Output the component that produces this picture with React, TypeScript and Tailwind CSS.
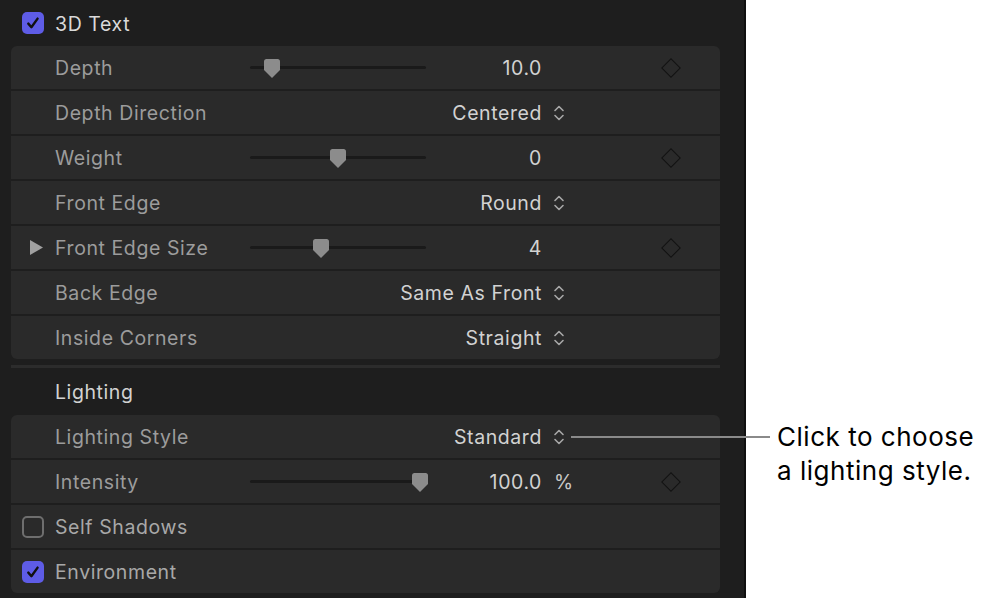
import React from "react";

const Thumb = () => (
  <svg width="16" height="19" viewBox="0 0 16 19" className="block">
    <path d="M2.5 0 H13.5 Q16 0 16 2.5 V11 L8 19 L0 11 V2.5 Q0 0 2.5 0 Z" fill="#8c8c8c" />
  </svg>
);

const Slider = ({ pos }: { pos: number }) => (
  <div className="relative w-[176px] h-[20px] flex items-center">
    <div className="w-full h-[3px] rounded-full bg-[#1a1a1a]" />
    <div className="absolute top-[1px]" style={{ left: pos - 8 }}>
      <Thumb />
    </div>
  </div>
);

const Diamond = () => (
  <div className="w-[14px] h-[14px] rotate-45 border-[1.5px] border-[#121212]" />
);

const UpDown = () => (
  <svg width="12" height="20" viewBox="0 0 12 20" className="block">
    <path d="M2 7.5 L6 3.5 L10 7.5" fill="none" stroke="#a8a8a8" strokeWidth="1.6" strokeLinecap="round" strokeLinejoin="round" />
    <path d="M2 12.5 L6 16.5 L10 12.5" fill="none" stroke="#a8a8a8" strokeWidth="1.6" strokeLinecap="round" strokeLinejoin="round" />
  </svg>
);

const Check = ({ on }: { on: boolean }) =>
  on ? (
    <div className="w-[22px] h-[22px] rounded-[5px] bg-[#5e5ce6] flex items-center justify-center">
      <svg width="14" height="14" viewBox="0 0 14 14">
        <path d="M2.3 7.6 L5.4 11.2 L11.6 2.6" fill="none" stroke="#111" strokeWidth="2.4" strokeLinecap="round" strokeLinejoin="round" />
      </svg>
    </div>
  ) : (
    <div className="w-[22px] h-[22px] rounded-[5px] border-2 border-[#6e6e6e]" />
  );

type RowProps = {
  label: string;
  slider?: number;
  value?: string;
  unit?: string;
  popup?: boolean;
  key_?: boolean;
  lead?: "check-on" | "check-off" | "tri";
};

const Row = ({ label, slider, value, unit, popup, key_, lead }: RowProps) => (
  <div className="h-[43px] bg-[#2a2a2a] flex items-center">
    <div className="w-[239px] flex items-center h-full">
      <div className="w-[44px] h-full flex items-center">
        {lead === "check-on" && <div className="ml-[11px]"><Check on /></div>}
        {lead === "check-off" && <div className="ml-[11px]"><Check on={false} /></div>}
        {lead === "tri" && (
          <svg width="13" height="15" viewBox="0 0 13 15" className="ml-[19px]">
            <path d="M0 0 L13 7.5 L0 15 Z" fill="#a0a0a0" />
          </svg>
        )}
      </div>
      <span
        className={`pt-[3px] whitespace-nowrap text-[19.5px] tracking-[0.03em] ${
          lead === "check-on" || lead === "check-off" ? "text-[#a8a8a8]" : "text-[#9c9c9c]"
        }`}
      >
        {label}
      </span>
    </div>
    <div className="w-[176px]">{slider !== undefined && <Slider pos={slider} />}</div>
    <div className="w-[116px] flex justify-end whitespace-nowrap pt-[3px] text-[19.5px] tracking-[0.03em] text-[#d2d2d2]">
      {value}
    </div>
    <div className="w-[40px] flex items-center">
      {popup && <div className="ml-[11px]"><UpDown /></div>}
      {unit && <span className="ml-[12px] pt-[3px] text-[19.5px] text-[#c8c8c8]">{unit}</span>}
    </div>
    <div className="w-[98px] flex justify-end">{key_ && <div className="mr-[2px]"><Diamond /></div>}</div>
  </div>
);

export default function App() {
  return (
    <div
      className="relative w-[984px] h-[600px] bg-white flex overflow-hidden"
      style={{ fontFamily: "Inter, 'Noto Sans', sans-serif" }}
    >
      <div className="w-[746px] h-[598px] bg-[#1e1e1e] border-r-2 border-[#101010] flex flex-col">
        <div className="h-[46px] flex items-center">
          <div className="ml-[22px]"><Check on /></div>
          <span className="ml-[11px] pt-[3px] text-[19.5px] tracking-[0.03em] text-[#dadada]">3D Text</span>
        </div>
        <div className="mx-[11px] w-[709px] rounded-[6px] overflow-hidden flex flex-col gap-[2px] bg-[#1e1e1e]">
          <Row label="Depth" slider={22} value="10.0" key_ />
          <Row label="Depth Direction" value="Centered" popup />
          <Row label="Weight" slider={88} value="0" key_ />
          <Row label="Front Edge" value="Round" popup />
          <Row label="Front Edge Size" slider={71} value="4" key_ lead="tri" />
          <Row label="Back Edge" value="Same As Front" popup />
          <Row label="Inside Corners" value="Straight" popup />
        </div>
        <div className="mx-[11px] w-[709px] h-[3px] mt-[6px] bg-[#2c2c2c]" />
        <div className="h-[47px] flex items-center pl-[55px]">
          <span className="pt-[3px] text-[19.5px] tracking-[0.03em] text-[#d2d2d2]">Lighting</span>
        </div>
        <div className="mx-[11px] w-[709px] rounded-[6px] overflow-hidden flex flex-col gap-[2px] bg-[#1e1e1e]">
          <Row label="Lighting Style" value="Standard" popup />
          <Row label="Intensity" slider={170} value="100.0" unit="%" key_ />
          <Row label="Self Shadows" lead="check-off" />
          <Row label="Environment" lead="check-on" />
        </div>
      </div>
      <div className="absolute left-[571px] top-[436px] w-[199px] h-[2px] bg-[#8a8a8a]" />
      <div className="absolute left-[777px] top-[420px] text-[26px] leading-[34px] tracking-[0.02em] text-black">
        <div>Click to choose</div>
        <div>a lighting style.</div>
      </div>
    </div>
  );
}
